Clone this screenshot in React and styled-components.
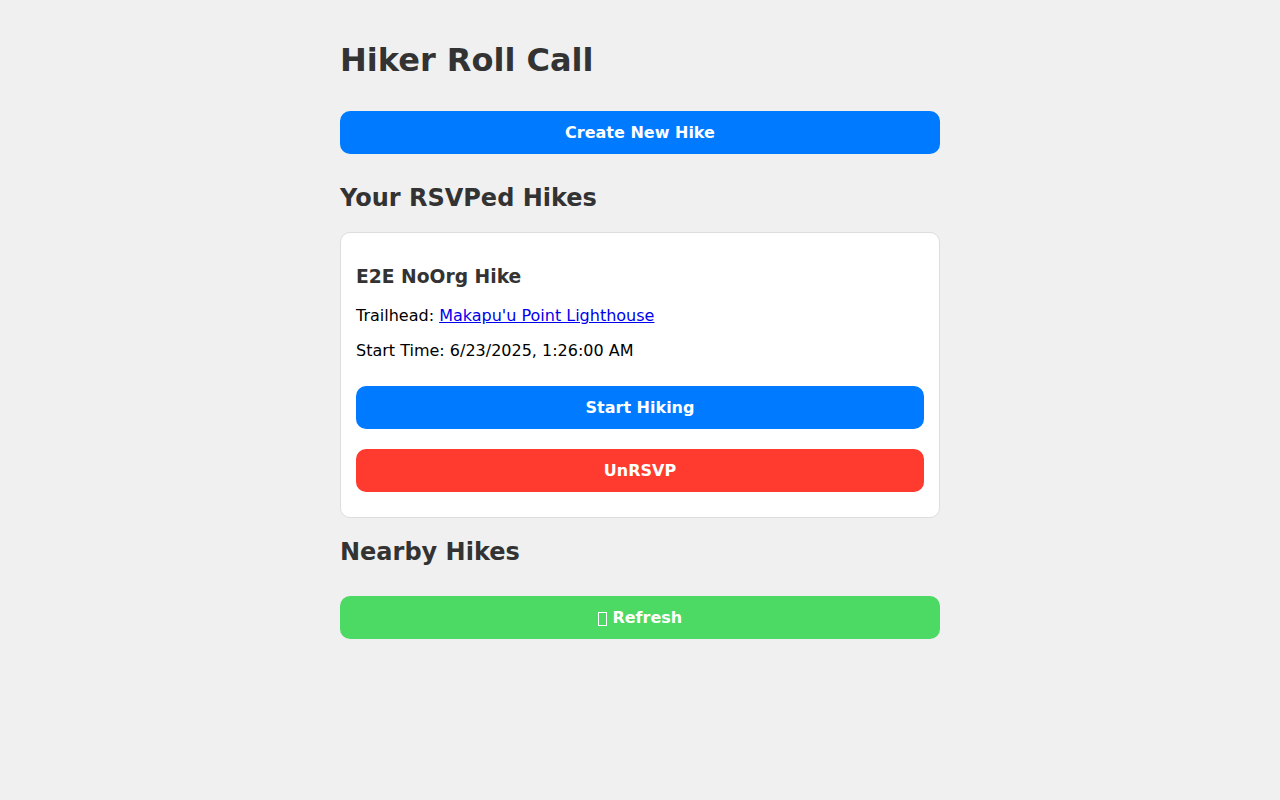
import React from 'react';
import styled, { createGlobalStyle } from 'styled-components';

const GlobalStyle = createGlobalStyle`
  body {
    margin: 0;
    background: #f0f0f0;
    color: #000;
    font-family: "DejaVu Sans", sans-serif;
    font-size: 16px;
    line-height: normal;
  }
`;

const Page = styled.main`
  box-sizing: border-box;
  width: 100%;
  max-width: 640px;
  margin: 0 auto;
  padding: 20px;
`;

const PageTitle = styled.h1`
  font-size: 32px;
  color: #333;
`;

const SectionTitle = styled.h2`
  font-size: 24px;
  color: #333;
`;

const HikeTitle = styled.h3`
  color: #333;
`;

const HikeCard = styled.article`
  padding: 15px;
  background: #fff;
  border: 1px solid #ddd;
  border-radius: 10px;
`;

const Detail = styled.p`
  margin: 16px 0;
`;

const tones = { primary: '#007bff', danger: '#ff3b30', success: '#4cd964' };

const Button = styled.button`
  display: inline-block;
  width: 100%;
  margin: 10px 0;
  padding: 12px;
  border: none;
  border-radius: 10px;
  background: ${({ $tone }) => tones[$tone]};
  color: #fff;
  font-family: inherit;
  font-size: 16px;
  font-weight: bold;
  cursor: pointer;
`;

const RefreshMark = styled.span`
  display: inline-block;
  box-sizing: border-box;
  width: 9px;
  height: 14px;
  border: 1px solid currentColor;
  vertical-align: -3px;
`;

export default function App() {
  return (
    <>
      <GlobalStyle />
      <Page>
        <PageTitle>Hiker Roll Call</PageTitle>
        <Button type="button" $tone="primary">Create New Hike</Button>
        <section>
          <SectionTitle>Your RSVPed Hikes</SectionTitle>
          <HikeCard>
            <HikeTitle>E2E NoOrg Hike</HikeTitle>
            <Detail>
              Trailhead: <a href="#trailhead">Makapu'u Point Lighthouse</a>
            </Detail>
            <Detail>Start Time: 6/23/2025, 1:26:00 AM</Detail>
            <Button type="button" $tone="primary">Start Hiking</Button>
            <Button type="button" $tone="danger">UnRSVP</Button>
          </HikeCard>
        </section>
        <section>
          <SectionTitle>Nearby Hikes</SectionTitle>
          <Button type="button" $tone="success">
            <RefreshMark aria-hidden="true" /> Refresh
          </Button>
        </section>
      </Page>
    </>
  );
}
